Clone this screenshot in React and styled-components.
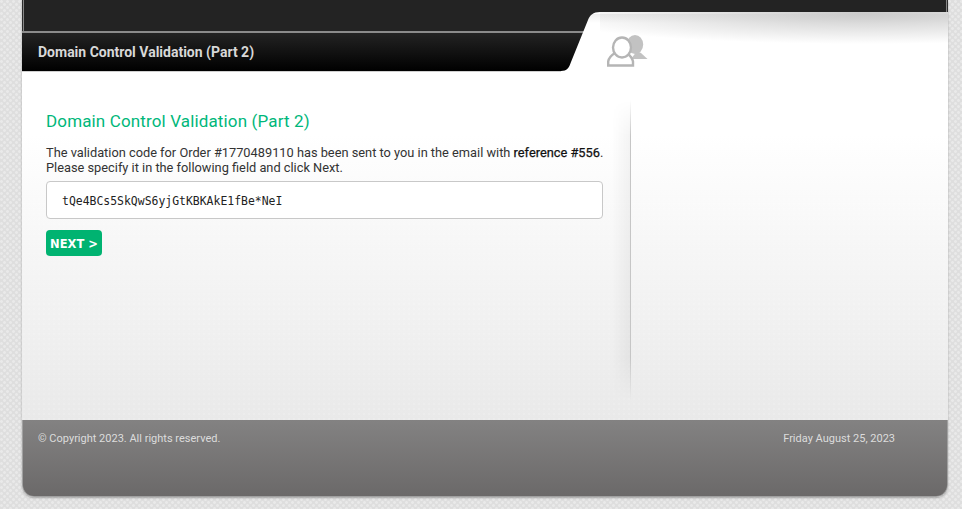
import React from "react";
import styled, { createGlobalStyle } from "styled-components";

const GlobalStyle = createGlobalStyle`
  html, body {
    margin: 0;
    padding: 0;
    height: 100%;
  }
  body {
    overflow: hidden;
    font-family: Roboto, "Liberation Sans", sans-serif;
    background-color: #dedede;
    background-image:
      radial-gradient(circle at 1.5px 1.5px, #e9e9e9 1.2px, transparent 1.6px),
      radial-gradient(circle at 4.5px 4.5px, #e9e9e9 1.2px, transparent 1.6px);
    background-size: 6px 6px;
  }
`;

const Shell = styled.div`
  width: 926px;
  height: 497px;
  margin-left: 22px;
  display: flex;
  flex-direction: column;
  border-radius: 0 0 12px 12px;
  overflow: hidden;
  box-shadow: 0 1px 2px rgba(90, 90, 90, 0.45);
`;

const Header = styled.header`
  position: relative;
  display: flex;
  height: 72px;
  flex: none;
  background: #fff;
`;

const TitleColumn = styled.div`
  flex: 0 0 578px;
  display: flex;
  flex-direction: column;
`;

const TopStrip = styled.div`
  height: ${(p) => p.$h}px;
  flex: none;
  background: #232323;
  box-shadow: ${(p) =>
    p.$edge === "left"
      ? "inset 1px 0 #2c2c2c, inset 2px 0 #868686"
      : "inset -1px 0 #2c2c2c, inset -2px 0 #868686"};
`;

const TitleBar = styled.div`
  height: 40px;
  flex: none;
  box-sizing: border-box;
  display: flex;
  align-items: center;
  padding-left: 16px;
  border-top: 2px solid #8b8b8b;
  background: linear-gradient(#232323, #000);
  box-shadow: 0 1px 0 #cfcfcf;
`;

const TitleText = styled.h1`
  margin: 0;
  font-size: 14px;
  font-weight: 700;
  color: #d8d8d8;
`;

const TabColumn = styled.div`
  flex: 1;
  display: flex;
  flex-direction: column;
`;

const TabPanel = styled.div`
  flex: 1;
  padding: 23px 0 0 7px;
  background:
    radial-gradient(ellipse 330px 30px at 76% 2px, #cbcbcb 0%, rgba(203, 203, 203, 0) 100%),
    linear-gradient(#ffffff 2px, #eeeeee 2px, #ffffff 11px);
`;

const TabCurve = styled.svg`
  position: absolute;
  left: 538px;
  top: 12px;
`;

const Body = styled.main`
  flex: 1;
  display: flex;
  background-image:
    radial-gradient(circle at 2px 2px, rgba(255, 255, 255, 0.12) 1px, transparent 1.5px),
    linear-gradient(#ffffff 0%, #ffffff 18%, #e9e9e9 100%);
  background-size: 5px 5px, 100% 100%;
`;

const MainColumn = styled.section`
  position: relative;
  flex: 0 0 609px;
  box-sizing: border-box;
  height: 300px;
  margin-top: 28px;
  padding: 11px 20px 0 24px;

  &::after {
    content: "";
    position: absolute;
    top: 0;
    right: 0;
    bottom: 0;
    width: 18px;
    border-right: 1px solid #c6c6c6;
    background: linear-gradient(to left, rgba(0, 0, 0, 0.045), rgba(0, 0, 0, 0));
    mask-image: linear-gradient(transparent, #000 12%, #000 86%, transparent);
  }
`;

const Heading = styled.h2`
  margin: 0 0 14px;
  font-size: 17px;
  line-height: 20px;
  font-weight: 400;
  letter-spacing: 0.14px;
  color: #00b77a;
`;

const Message = styled.p`
  margin: 0 0 6px;
  font-size: 12.8px;
  line-height: 15px;
  color: #333;
`;

const Strong = styled.span`
  color: #111;
  -webkit-text-stroke: 0.25px #111;
`;

const CodeInput = styled.input`
  display: block;
  width: 557px;
  height: 38px;
  box-sizing: border-box;
  padding: 1px 15px 0;
  border: 1px solid #c8c8c8;
  border-radius: 4px;
  background: #fff;
  outline: none;
  font-family: "DejaVu Sans Mono", monospace;
  font-size: 11.45px;
  color: #222;
`;

const NextButton = styled.button`
  display: block;
  margin-top: 11px;
  width: 56px;
  height: 26px;
  padding: 1px 0 0;
  border: none;
  border-radius: 4px;
  background: #00b371;
  color: #fff;
  font-family: "DejaVu Sans", sans-serif;
  font-size: 11.5px;
  font-weight: 700;
`;

const Footer = styled.footer`
  height: 77px;
  flex: none;
  box-sizing: border-box;
  display: flex;
  justify-content: space-between;
  padding: 12px 52px 0 15px;
  font-size: 11px;
  line-height: 13px;
  color: #dcdcdc;
  background: linear-gradient(#838282, #6b6969);
  border: 1px solid #a0a0a0;
  border-top: none;
  border-radius: 0 0 12px 12px;
`;

const PeopleSvg = styled.svg`
  display: block;
`;

const PeopleIcon = () => (
  <PeopleSvg width="41" height="32" viewBox="0 0 41 32">
    <ellipse cx="28" cy="9.500" rx="8.200" ry="9.500" fill="#c2c2c2" />
    <path d="M30 16 L34 18 L40.500 24 H24 Z" fill="#c2c2c2" />
    <path d="M8 18C4 20.500 1.500 24 1.200 26.500V30.500H26V26.500C25.500 23.500 23 20.500 20 18Z" fill="#fff" stroke="#b5b5b5" strokeWidth="2.400" />
    <ellipse cx="15" cy="12.500" rx="9" ry="10" fill="#fff" stroke="#b5b5b5" strokeWidth="2.400" />
  </PeopleSvg>
);

function App() {
  return (
    <>
      <GlobalStyle />
      <Shell>
        <Header>
          <TitleColumn>
            <TopStrip $h={31} $edge="left" />
            <TitleBar>
              <TitleText>Domain Control Validation (Part 2)</TitleText>
            </TitleBar>
          </TitleColumn>
          <TabColumn>
            <TopStrip $h={12} $edge="right" />
            <TabPanel>
              <PeopleIcon />
            </TabPanel>
          </TabColumn>
          <TabCurve width="40" height="60" viewBox="0 0 40 60">
            <defs>
              <linearGradient id="tabFill" x1="0" y1="0" x2="0" y2="11" gradientUnits="userSpaceOnUse">
                <stop offset="0.18" stopColor="#ffffff" />
                <stop offset="0.18" stopColor="#eeeeee" />
                <stop offset="1" stopColor="#ffffff" />
              </linearGradient>
            </defs>
            <path d="M40 0C33 0 30 3 28 8L11 50C9 56 7 59 1 59V60H40Z" fill="url(#tabFill)" />
          </TabCurve>
        </Header>
        <Body>
          <MainColumn>
            <Heading>Domain Control Validation (Part 2)</Heading>
            <Message>
              The validation code for Order #1770489110 has been sent to you in the email with{" "}
              <Strong>reference #556</Strong>.<br />
              Please specify it in the following field and click Next.
            </Message>
            <CodeInput readOnly value="tQe4BCs5SkQwS6yjGtKBKAkE1fBe*NeI" />
            <NextButton type="button">NEXT &gt;</NextButton>
          </MainColumn>
        </Body>
        <Footer>
          <span>© Copyright 2023. All rights reserved.</span>
          <span>Friday August 25, 2023</span>
        </Footer>
      </Shell>
    </>
  );
}

export default App;
